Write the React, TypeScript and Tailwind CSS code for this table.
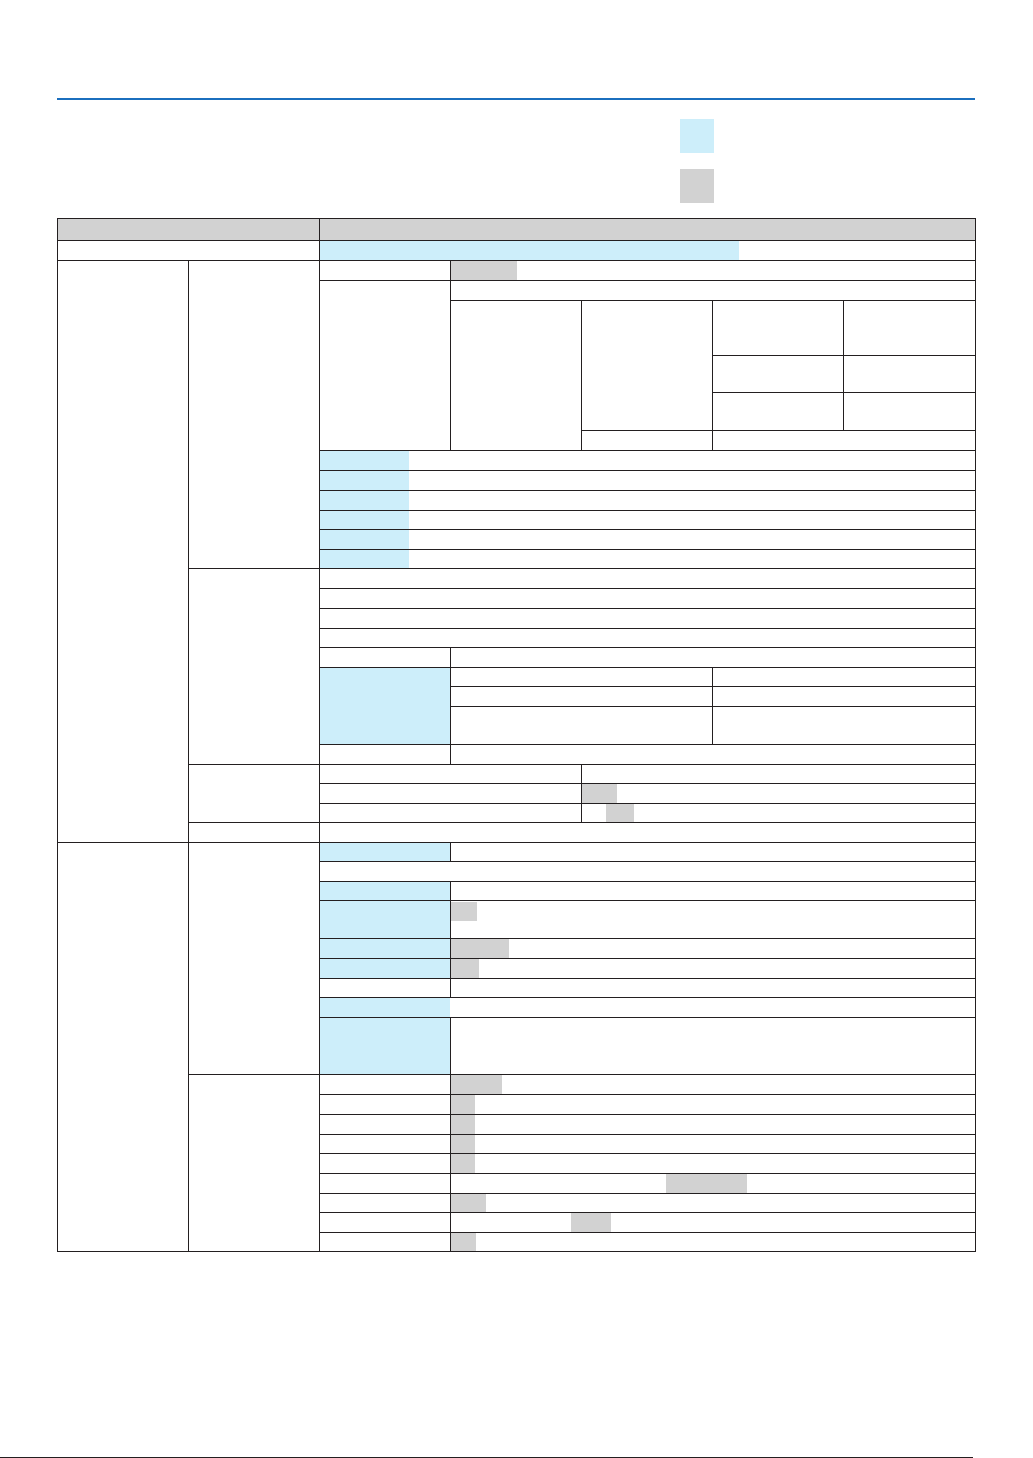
import type { ReactNode } from 'react'

type Fill = 'none' | 'blue' | 'gray'

interface CellProps {
  rs?: number
  cs?: number
  fill?: Fill
  children?: ReactNode
}

function fillClass(fill: Fill) {
  if (fill === 'blue') return 'bg-[#cdeefa]'
  if (fill === 'gray') return 'bg-[#d2d2d2]'
  return 'bg-white'
}

function Cell({ rs = 1, cs = 1, fill = 'none', children }: CellProps) {
  return (
    <td
      rowSpan={rs}
      colSpan={cs}
      className={`p-0 align-top border-r border-b border-[#231f20] ${fillClass(fill)}`}
    >
      {children}
    </td>
  )
}

// highlighted run inside a cell (blue label band or gray marked value)
function Mark({ className }: { className: string }) {
  return <div className={className} />
}

export default function App() {
  return (
    <div className="w-[1033px] h-[1458px] bg-white flex flex-col font-['Liberation_Sans',sans-serif]">
      <div className="px-[57px] pt-[98px] flex flex-col">
        <div className="w-[918px] h-[2px] bg-[#1b6fbe]" />

        <div className="ml-[623px] mt-[19px] flex flex-col gap-[16px]">
          <div className="w-[34px] h-[34px] bg-[#cdeefa]" />
          <div className="w-[34px] h-[34px] bg-[#d2d2d2]" />
        </div>

        <table className="mt-[15px] w-[919px] table-fixed border-separate border-spacing-0 border-l border-t border-[#231f20]">
          <colgroup>
            <col className="w-[131px]" />
            <col className="w-[131px]" />
            <col className="w-[131px]" />
            <col className="w-[131px]" />
            <col className="w-[131px]" />
            <col className="w-[131px]" />
            <col className="w-[132px]" />
          </colgroup>
          <tbody>
            <tr className="h-[22px]">
              <Cell cs={2} fill="gray" />
              <Cell cs={5} fill="gray" />
            </tr>
            <tr className="h-[20px]">
              <Cell cs={2} />
              <Cell cs={5}>
                <Mark className="w-[419px] h-[19px] bg-[#cdeefa]" />
              </Cell>
            </tr>

            {/* section A */}
            <tr className="h-[20px]">
              <Cell rs={25} />
              <Cell rs={12} />
              <Cell />
              <Cell cs={4}>
                <Mark className="w-[66px] h-[19px] bg-[#d2d2d2]" />
              </Cell>
            </tr>
            <tr className="h-[20px]">
              <Cell rs={5} />
              <Cell cs={4} />
            </tr>
            <tr className="h-[55px]">
              <Cell rs={4} />
              <Cell rs={3} />
              <Cell />
              <Cell />
            </tr>
            <tr className="h-[37px]">
              <Cell />
              <Cell />
            </tr>
            <tr className="h-[38px]">
              <Cell />
              <Cell />
            </tr>
            <tr className="h-[20px]">
              <Cell />
              <Cell cs={2} />
            </tr>
            <tr className="h-[20px]">
              <Cell cs={5}>
                <Mark className="w-[89px] h-[19px] bg-[#cdeefa]" />
              </Cell>
            </tr>
            <tr className="h-[20px]">
              <Cell cs={5}>
                <Mark className="w-[89px] h-[19px] bg-[#cdeefa]" />
              </Cell>
            </tr>
            <tr className="h-[20px]">
              <Cell cs={5}>
                <Mark className="w-[89px] h-[19px] bg-[#cdeefa]" />
              </Cell>
            </tr>
            <tr className="h-[19px]">
              <Cell cs={5}>
                <Mark className="w-[89px] h-[18px] bg-[#cdeefa]" />
              </Cell>
            </tr>
            <tr className="h-[20px]">
              <Cell cs={5}>
                <Mark className="w-[89px] h-[19px] bg-[#cdeefa]" />
              </Cell>
            </tr>
            <tr className="h-[19px]">
              <Cell cs={5}>
                <Mark className="w-[89px] h-[18px] bg-[#cdeefa]" />
              </Cell>
            </tr>

            <tr className="h-[20px]">
              <Cell rs={9} />
              <Cell cs={5} />
            </tr>
            <tr className="h-[20px]">
              <Cell cs={5} />
            </tr>
            <tr className="h-[20px]">
              <Cell cs={5} />
            </tr>
            <tr className="h-[19px]">
              <Cell cs={5} />
            </tr>
            <tr className="h-[20px]">
              <Cell />
              <Cell cs={4} />
            </tr>
            <tr className="h-[19px]">
              <Cell rs={3} fill="blue" />
              <Cell cs={2} />
              <Cell cs={2} />
            </tr>
            <tr className="h-[20px]">
              <Cell cs={2} />
              <Cell cs={2} />
            </tr>
            <tr className="h-[38px]">
              <Cell cs={2} />
              <Cell cs={2} />
            </tr>
            <tr className="h-[20px]">
              <Cell />
              <Cell cs={4} />
            </tr>

            <tr className="h-[19px]">
              <Cell rs={3} />
              <Cell cs={2} />
              <Cell cs={3} />
            </tr>
            <tr className="h-[20px]">
              <Cell cs={2} />
              <Cell cs={3}>
                <Mark className="w-[35px] h-[19px] bg-[#d2d2d2]" />
              </Cell>
            </tr>
            <tr className="h-[19px]">
              <Cell cs={2} />
              <Cell cs={3}>
                <Mark className="ml-[24px] w-[28px] h-[18px] bg-[#d2d2d2]" />
              </Cell>
            </tr>

            <tr className="h-[20px]">
              <Cell />
              <Cell cs={5} />
            </tr>

            {/* section B */}
            <tr className="h-[19px]">
              <Cell rs={18} />
              <Cell rs={9} />
              <Cell fill="blue" />
              <Cell cs={4} />
            </tr>
            <tr className="h-[20px]">
              <Cell cs={5} />
            </tr>
            <tr className="h-[19px]">
              <Cell fill="blue" />
              <Cell cs={4} />
            </tr>
            <tr className="h-[38px]">
              <Cell fill="blue" />
              <Cell cs={4}>
                <Mark className="mt-[1px] w-[26px] h-[19px] bg-[#d2d2d2]" />
              </Cell>
            </tr>
            <tr className="h-[20px]">
              <Cell fill="blue" />
              <Cell cs={4}>
                <Mark className="w-[58px] h-[19px] bg-[#d2d2d2]" />
              </Cell>
            </tr>
            <tr className="h-[20px]">
              <Cell fill="blue" />
              <Cell cs={4}>
                <Mark className="w-[28px] h-[19px] bg-[#d2d2d2]" />
              </Cell>
            </tr>
            <tr className="h-[19px]">
              <Cell />
              <Cell cs={4} />
            </tr>
            <tr className="h-[20px]">
              <Cell cs={5}>
                <Mark className="w-[130px] h-[19px] bg-[#cdeefa]" />
              </Cell>
            </tr>
            <tr className="h-[57px]">
              <Cell fill="blue" />
              <Cell cs={4} />
            </tr>

            <tr className="h-[20px]">
              <Cell rs={9} />
              <Cell />
              <Cell cs={4}>
                <Mark className="w-[51px] h-[19px] bg-[#d2d2d2]" />
              </Cell>
            </tr>
            <tr className="h-[20px]">
              <Cell />
              <Cell cs={4}>
                <Mark className="w-[24px] h-[19px] bg-[#d2d2d2]" />
              </Cell>
            </tr>
            <tr className="h-[20px]">
              <Cell />
              <Cell cs={4}>
                <Mark className="w-[24px] h-[19px] bg-[#d2d2d2]" />
              </Cell>
            </tr>
            <tr className="h-[19px]">
              <Cell />
              <Cell cs={4}>
                <Mark className="w-[24px] h-[18px] bg-[#d2d2d2]" />
              </Cell>
            </tr>
            <tr className="h-[20px]">
              <Cell />
              <Cell cs={4}>
                <Mark className="w-[24px] h-[19px] bg-[#d2d2d2]" />
              </Cell>
            </tr>
            <tr className="h-[20px]">
              <Cell />
              <Cell cs={4}>
                <Mark className="ml-[215px] w-[81px] h-[19px] bg-[#d2d2d2]" />
              </Cell>
            </tr>
            <tr className="h-[19px]">
              <Cell />
              <Cell cs={4}>
                <Mark className="w-[35px] h-[18px] bg-[#d2d2d2]" />
              </Cell>
            </tr>
            <tr className="h-[20px]">
              <Cell />
              <Cell cs={4}>
                <Mark className="ml-[120px] w-[40px] h-[19px] bg-[#d2d2d2]" />
              </Cell>
            </tr>
            <tr className="h-[19px]">
              <Cell />
              <Cell cs={4}>
                <Mark className="w-[25px] h-[18px] bg-[#d2d2d2]" />
              </Cell>
            </tr>
          </tbody>
        </table>
      </div>

      <div className="mt-auto w-[973px] h-px bg-[#231f20]" />
    </div>
  )
}
